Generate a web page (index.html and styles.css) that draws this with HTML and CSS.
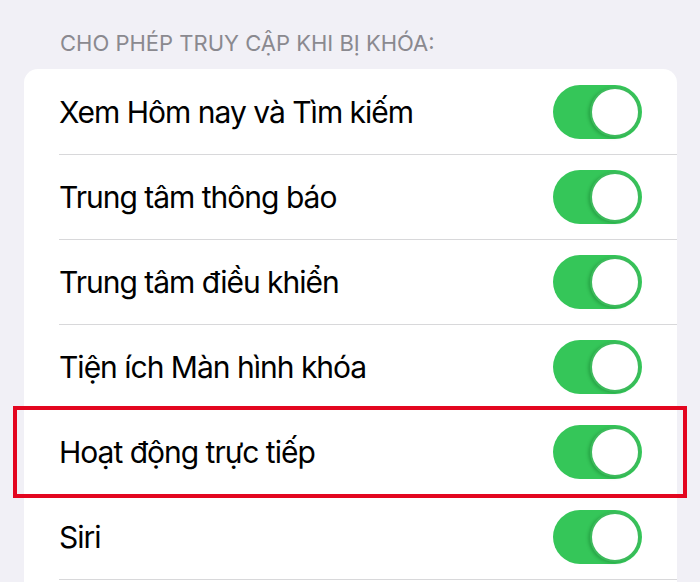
FILE: index.html
```html
<!DOCTYPE html>
<html lang="vi">
<head>
<meta charset="utf-8">
<title>Cho phép truy cập khi bị khóa</title>
<link rel="stylesheet" href="styles.css">
</head>
<body>
  <section class="group">
    <h2 class="group-title">CHO PHÉP TRUY CẬP KHI BỊ KHÓA:</h2>
    <ul class="list">
      <li class="row"><span class="label">Xem Hôm nay và Tìm kiếm</span><span class="switch on"><span class="knob"></span></span></li>
      <li class="row"><span class="label">Trung tâm thông báo</span><span class="switch on"><span class="knob"></span></span></li>
      <li class="row"><span class="label">Trung tâm điều khiển</span><span class="switch on"><span class="knob"></span></span></li>
      <li class="row"><span class="label">Tiện ích Màn hình khóa</span><span class="switch on"><span class="knob"></span></span></li>
      <li class="row highlighted"><span class="label">Hoạt động trực tiếp</span><span class="switch on"><span class="knob"></span></span><span class="mark"></span></li>
      <li class="row"><span class="label">Siri</span><span class="switch on"><span class="knob"></span></span></li>
    </ul>
  </section>
</body>
</html>
```

FILE: styles.css
```css
html, body {
  margin: 0;
  padding: 0;
  background: #f1f0f6;
  overflow: hidden;
}

body {
  font-family: Inter, "Noto Sans", sans-serif;
  color: #000;
  height: 582px;
}

.group {
  padding-top: 31px;
}

.group-title {
  margin: 0 0 14px 60px;
  font-size: 22px;
  font-weight: 400;
  line-height: 24px;
  color: #8a898f;
  letter-spacing: 0;
}

.list {
  list-style: none;
  margin: 0 23px 0 24px;
  padding: 0 0 40px 35px;
  background: #fff;
  border-radius: 14px;
}

.row {
  position: relative;
  box-sizing: border-box;
  display: flex;
  align-items: center;
  justify-content: space-between;
  height: 85px;
  padding-right: 35px;
}

/* hairline between rows, inset to the text column */
.row + .row {
  border-top: 1px solid #d8d8da;
}

.row:last-child {
  height: 86px;
  border-bottom: 1px solid #d8d8da;
}

.label {
  font-size: 30px;
  line-height: 36px;
  letter-spacing: -1px;
}

.switch {
  position: relative;
  width: 89px;
  height: 54px;
  border-radius: 27px;
  background: #35c659;
  flex: none;
}

.knob {
  position: absolute;
  top: 2px;
  right: 2px;
  width: 46px;
  height: 46px;
  border-radius: 50%;
  background: #fff;
  border: 2px solid #3dbb5c;
  box-shadow: -2px 1px 3px rgba(0, 80, 20, 0.25);
}

/* red callout frame drawn over the row */
.mark {
  position: absolute;
  z-index: 1;
  left: -46px;
  right: -10px;
  top: -4px;
  bottom: -4px;
  border: 4px solid #e3061f;
  pointer-events: none;
}
```
